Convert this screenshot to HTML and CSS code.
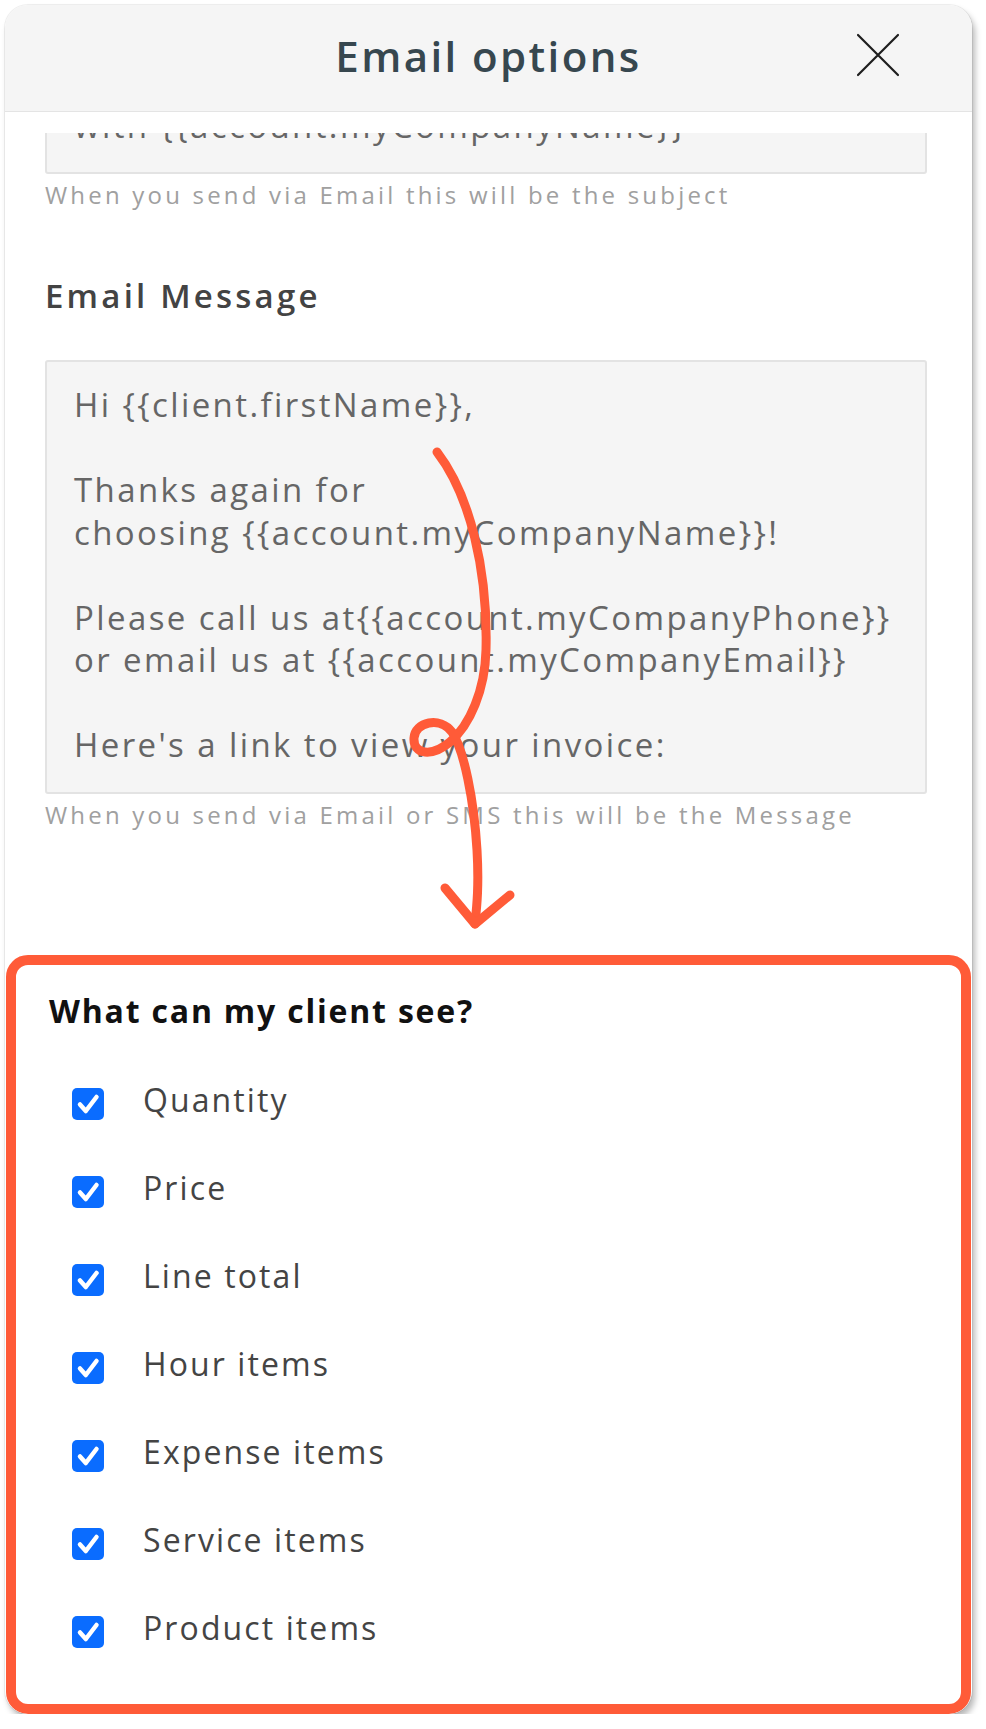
FILE: index.html
```html
<!DOCTYPE html>
<html lang="en">
<head>
    <meta charset="UTF-8">
    <meta name="viewport" content="width=device-width, initial-scale=1.0">
    <title>Email options</title>
    <link rel="stylesheet" href="styles.css">
</head>
<body>

<div class="sheet">
    <header class="sheet-head">
        <span></span>
        <h1 class="sheet-title">Email options</h1>
        <button class="close-btn" aria-label="Close">
            <svg width="44" height="44" viewBox="0 0 44 44">
                <path d="M2 2 L42 42 M42 2 L2 42" stroke="#1e1e1e" stroke-width="2.2" stroke-linecap="round" fill="none"/>
            </svg>
        </button>
    </header>

    <div class="sheet-body">
        <div class="subject-clip">
            <div class="field-box">with {{account.myCompanyName}}</div>
        </div>
        <p class="hint">When you send via Email this will be the subject</p>

        <h2 class="field-label">Email Message</h2>
        <div class="field-box message">Hi {{client.firstName}},<br><br>Thanks again for<br>choosing {{account.myCompanyName}}!<br><br>Please call us at{{account.myCompanyPhone}}<br>or email us at {{account.myCompanyEmail}}<br><br>Here's a link to view your invoice:</div>
        <p class="hint">When you send via Email or SMS this will be the Message</p>
    </div>

    <section class="visibility">
        <h3 class="visibility-title">What can my client see?</h3>
        <ul class="check-list">
            <li class="check-row"><span class="check-box"><svg width="32" height="32" viewBox="0 0 32 32"><path d="M8 16.5 L13.8 23 L24.5 9" /></svg></span><span class="check-label">Quantity</span></li>
            <li class="check-row"><span class="check-box"><svg width="32" height="32" viewBox="0 0 32 32"><path d="M8 16.5 L13.8 23 L24.5 9" /></svg></span><span class="check-label">Price</span></li>
            <li class="check-row"><span class="check-box"><svg width="32" height="32" viewBox="0 0 32 32"><path d="M8 16.5 L13.8 23 L24.5 9" /></svg></span><span class="check-label">Line total</span></li>
            <li class="check-row"><span class="check-box"><svg width="32" height="32" viewBox="0 0 32 32"><path d="M8 16.5 L13.8 23 L24.5 9" /></svg></span><span class="check-label">Hour items</span></li>
            <li class="check-row"><span class="check-box"><svg width="32" height="32" viewBox="0 0 32 32"><path d="M8 16.5 L13.8 23 L24.5 9" /></svg></span><span class="check-label">Expense items</span></li>
            <li class="check-row"><span class="check-box"><svg width="32" height="32" viewBox="0 0 32 32"><path d="M8 16.5 L13.8 23 L24.5 9" /></svg></span><span class="check-label">Service items</span></li>
            <li class="check-row"><span class="check-box"><svg width="32" height="32" viewBox="0 0 32 32"><path d="M8 16.5 L13.8 23 L24.5 9" /></svg></span><span class="check-label">Product items</span></li>
        </ul>
    </section>

    <!-- hand drawn pointer, drawn over the sheet -->
    <svg class="arrow" width="967" height="1709" viewBox="5 5 967 1709">
        <path d="M437 452 C470 495, 488 570, 486 650 C485 690, 470 725, 450 742 C432 757, 413 755, 414 738 C415 722, 440 716, 452 732 C464 750, 474 800, 477 850 C479 885, 477 905, 475 924" />
        <path d="M445 888 L475 924 L510 895" />
    </svg>
</div>

</body>
</html>
```

FILE: styles.css
```css
body {
    margin: 0;
    background-color: #fff;
    font-family: "Open Sans", "Noto Sans", sans-serif;
}
.sheet {
    position: relative;
    width: 967px;
    height: 1709px;
    margin: 5px 0 0 5px;
    background-color: #fff;
    border-radius: 23px;
    overflow: hidden;
    box-shadow: 0 0 0 1px rgba(0, 0, 0, 0.06), 3px 5px 6px rgba(0, 0, 0, 0.28);
}
.sheet-head {
    display: grid;
    grid-template-columns: 1fr auto 1fr;
    align-items: center;
    height: 100px;
    padding-bottom: 6px;
    background-color: #f5f5f5;
    border-bottom: 1px solid #e4e4e4;
}
.sheet-title {
    margin: 0;
    font-size: 42px;
    font-weight: 600;
    letter-spacing: 2.4px;
    color: #37474f;
}
.close-btn {
    justify-self: end;
    margin-right: 72px;
    padding: 0;
    border: 0;
    background: none;
    width: 44px;
    height: 44px;
    cursor: pointer;
}
.close-btn svg {
    display: block;
}
.sheet-body {
    padding: 21px 45px 0 40px;
}
.subject-clip {
    height: 41px;
    overflow: hidden;
    display: flex;
    flex-direction: column;
    justify-content: flex-end;
}
.field-box {
    flex-shrink: 0;
    background-color: #f5f5f5;
    border: 2px solid #e3e3e3;
    border-radius: 3px;
    padding: 22px 24px 25px 27px;
    font-size: 33px;
    line-height: 42.5px;
    letter-spacing: 2.4px;
    color: #666;
    white-space: nowrap;
}
.hint {
    margin: 6px 0 0;
    font-size: 24px;
    line-height: 30px;
    letter-spacing: 3.2px;
    color: #a0a0a0;
}
.field-label {
    margin: 66px 0 44px;
    font-size: 33px;
    line-height: 40px;
    font-weight: 600;
    letter-spacing: 3.2px;
    color: #434343;
}
.visibility {
    margin: 125px 1px 0;
    border: 10px solid #ff5b38;
    border-radius: 22px;
    padding: 26px 30px 56px 33px;
    background-color: #fff;
}
.visibility-title {
    margin: 0;
    font-size: 32px;
    line-height: 40px;
    font-weight: 700;
    letter-spacing: 1.8px;
    color: #111;
}
.check-list {
    list-style: none;
    margin: 57px 0 0;
    padding: 0 0 0 23px;
    display: flex;
    flex-direction: column;
    gap: 56px;
}
.check-row {
    display: flex;
    align-items: flex-start;
    gap: 39px;
    height: 32px;
}
.check-box {
    width: 32px;
    height: 32px;
    border-radius: 5px;
    background-color: #0a6cff;
    flex-shrink: 0;
}
.check-box svg {
    display: block;
}
.check-box path {
    fill: none;
    stroke: #fff;
    stroke-width: 4.5;
    stroke-linecap: round;
    stroke-linejoin: round;
}
.check-label {
    margin-top: -4px;
    font-size: 32px;
    line-height: 32px;
    letter-spacing: 2.1px;
    color: #444;
}
.arrow {
    position: absolute;
    left: 0;
    top: 0;
    pointer-events: none;
}
.arrow path {
    fill: none;
    stroke: #ff5b38;
    stroke-width: 9;
    stroke-linecap: round;
    stroke-linejoin: round;
}
```
